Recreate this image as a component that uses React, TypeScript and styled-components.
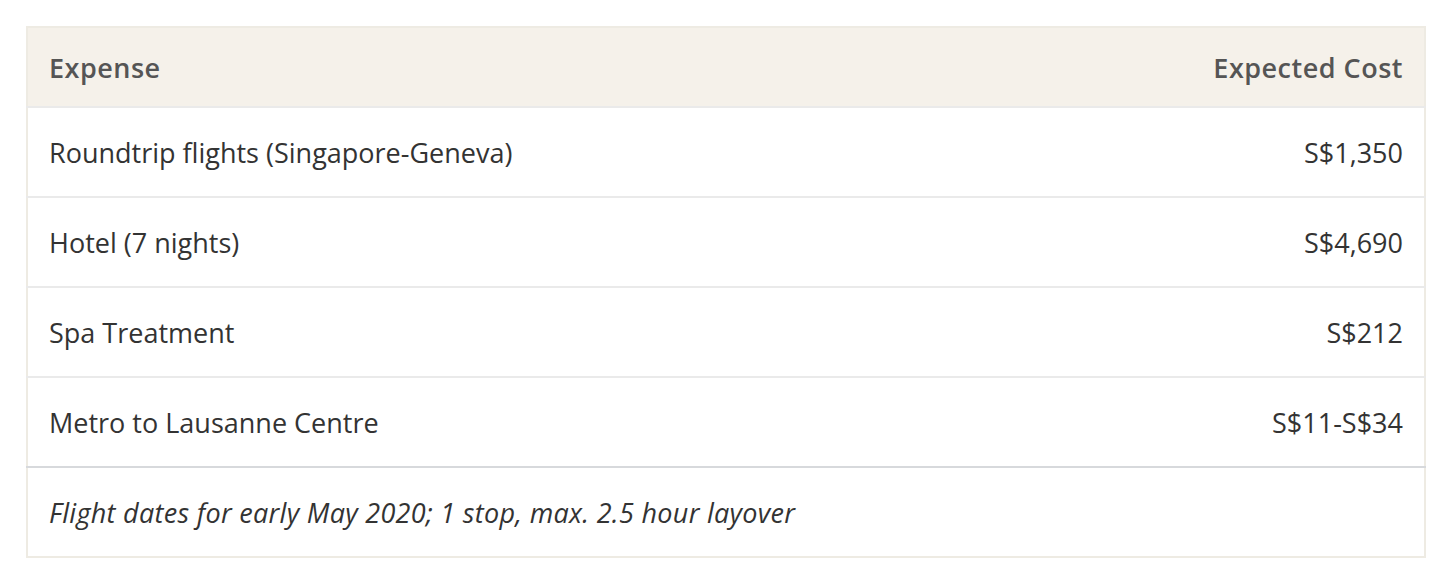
import React from "react";
import styled, { createGlobalStyle } from "styled-components";

const Global = createGlobalStyle`
  html, body { margin: 0; padding: 0; background: #ffffff; }
  body { font-family: "Open Sans", "Noto Sans", sans-serif; }
`;

const Page = styled.div`
  padding: 26px 20px 0 26px;
`;

const Table = styled.table`
  width: 1400px;
  border-collapse: collapse;
  border: 2px solid #eeebe3;
  font-size: 27px;
  color: #333333;
`;

const HeadRow = styled.tr`
  background: #f5f1ea;
  height: 80px;
`;

const Th = styled.th<{ $right?: boolean }>`
  padding: 0 21px;
  text-align: ${(p) => (p.$right ? "right" : "left")};
  font-weight: 600;
  letter-spacing: 0.5px;
  color: #555555;
`;

const Row = styled.tr<{ $last?: boolean }>`
  height: 90px;
  border-top: 2px solid #eaeaea;
  border-bottom: ${(p) => (p.$last ? "2px solid #d7d9dc" : "none")};
`;

const Td = styled.td<{ $right?: boolean }>`
  padding: 0 21px;
  text-align: ${(p) => (p.$right ? "right" : "left")};
  font-weight: 400;
`;

const Note = styled.td`
  padding: 0 21px;
  height: 88px;
  font-style: italic;
  letter-spacing: 0.3px;
`;

const rows = [
  ["Roundtrip flights (Singapore-Geneva)", "S$1,350"],
  ["Hotel (7 nights)", "S$4,690"],
  ["Spa Treatment", "S$212"],
  ["Metro to Lausanne Centre", "S$11-S$34"],
];

export default function App() {
  return (
    <>
      <Global />
      <Page>
        <Table>
          <thead>
            <HeadRow>
              <Th>Expense</Th>
              <Th $right>Expected Cost</Th>
            </HeadRow>
          </thead>
          <tbody>
            {rows.map((r, i) => (
              <Row key={r[0]} $last={i === rows.length - 1}>
                <Td>{r[0]}</Td>
                <Td $right>{r[1]}</Td>
              </Row>
            ))}
            <tr>
              <Note colSpan={2}>Flight dates for early May 2020; 1 stop, max. 2.5 hour layover</Note>
            </tr>
          </tbody>
        </Table>
      </Page>
    </>
  );
}
